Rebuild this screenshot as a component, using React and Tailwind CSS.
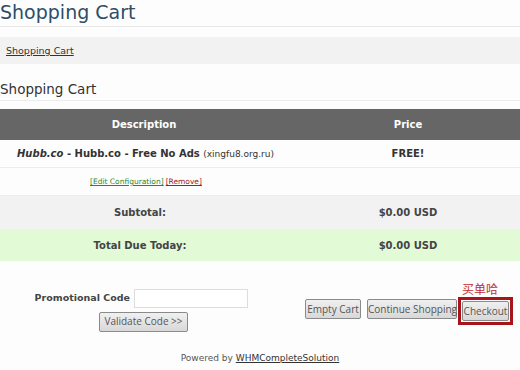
export default function App() {
  const font = { fontFamily: '"DejaVu Sans", Verdana, sans-serif' };
  const btn =
    'h-[20px] px-0 border border-[#8a8a8a] rounded-[2px] bg-gradient-to-b from-[#f0f0f0] to-[#d8d8d8] text-[10px] text-[#555] whitespace-nowrap font-["Open_Sans",sans-serif]';

  return (
    <div className="w-[520px] h-[370px] overflow-hidden bg-[#fdfdfd] text-[#333]" style={font}>
      <div className="h-[27px] border-b border-[#e8e8e8]">
        <h1 className="text-[19px] leading-[24px] text-[#2e4d68] whitespace-nowrap">Shopping Cart</h1>
      </div>
      <div className="mt-[10px] h-[27px] bg-[#f2f2f2] flex items-center px-[6px]">
        <a href="#" className="text-[9.5px] underline text-[#333] pt-[1px]">Shopping Cart</a>
      </div>
      <div className="mt-[16px] h-[21px] border-b border-[#ececec]">
        <h2 className="text-[13.5px] leading-[18px] text-[#333]">Shopping Cart</h2>
      </div>

      <div className="mt-[8px] text-[10px]">
        <div className="h-[31px] bg-[#666] text-white font-bold grid grid-cols-[288px_240px] items-center">
          <div className="text-center">Description</div>
          <div className="text-center">Price</div>
        </div>
        <div className="h-[28px] border-b border-[#ececec] grid grid-cols-[288px_240px] items-center">
          <div className="pl-[17px] font-bold whitespace-nowrap">
            <i>Hubb.co</i> - Hubb.co - Free No Ads <span className="font-normal text-[9px]">(xingfu8.org.ru)</span>
          </div>
          <div className="text-center font-bold">FREE!</div>
        </div>
        <div className="h-[28px] border-b border-[#ececec] flex items-center pl-[90px] text-[7.5px]">
          <a href="#" className="text-[#2a8a2a] underline">[Edit Configuration]</a>
          <a href="#" className="ml-[2px] text-[#a02020] underline">[Remove]</a>
        </div>
        <div className="h-[33px] bg-[#f2f2f2] grid grid-cols-[280px_256px] items-center font-bold text-[#444]">
          <div className="text-center">Subtotal:</div>
          <div className="text-center">$0.00 USD</div>
        </div>
        <div className="h-[32px] bg-[#e2fad6] grid grid-cols-[280px_256px] items-center font-bold text-[#444]">
          <div className="text-center">Total Due Today:</div>
          <div className="text-center">$0.00 USD</div>
        </div>
      </div>

      <div className="h-[84px] flex">
        <div className="w-[290px] pt-[28px] pl-[34px]">
          <div className="flex items-center">
            <span className="w-[100px] pr-[4px] text-right text-[9.5px] font-bold text-[#444] whitespace-nowrap">
              Promotional Code
            </span>
            <input className="w-[114px] h-[19px] border border-[#ddd] bg-white" />
          </div>
          <button className={`${btn} mt-[1px] ml-[65px] w-[89px]`}>Validate Code &gt;&gt;</button>
        </div>
        <div className="flex-1 flex items-start pt-[36px] pl-[15px]">
          <button className={`${btn} mt-[2px] w-[56px]`}>Empty Cart</button>
          <button className={`${btn} mt-[2px] ml-[6px] w-[90px]`}>Continue Shopping</button>
          <div className="relative ml-[1px]">
            <span
              className="absolute -top-[15px] left-[4px] text-[12px] leading-[14px] text-[#c03030] whitespace-nowrap"
              style={{ fontFamily: '"Noto Sans CJK SC", sans-serif' }}
            >
              买单哈
            </span>
            <div className="border-[3px] border-[#a8141a] p-[1px]">
              <button className={`${btn} block w-[47px]`}>Checkout</button>
            </div>
          </div>
        </div>
      </div>

      <div className="text-center text-[9px] leading-[12px] text-[#555] mt-[7px]">
        Powered by <a href="#" className="underline text-[#333]">WHMCompleteSolution</a>
      </div>
    </div>
  );
}
